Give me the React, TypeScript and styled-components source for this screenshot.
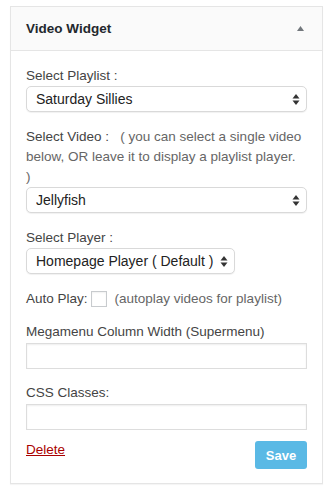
import styled, { createGlobalStyle } from "styled-components";

const GlobalStyle = createGlobalStyle`
  body {
    margin: 0;
    background: #ffffff;
    font-family: "Liberation Sans", Arial, sans-serif;
    color: #444;
  }
`;

const Page = styled.div`
  padding: 6px 10px 14px 10px;
`;

const Widget = styled.div`
  background: #fff;
  border: 1px solid #e5e5e5;
  box-shadow: 0 1px 1px rgba(0, 0, 0, 0.04);
`;

const Header = styled.div`
  height: 43px;
  display: flex;
  align-items: center;
  justify-content: space-between;
  padding: 0 18px 0 15px;
  background: #fafafa;
  border-bottom: 1px solid #e5e5e5;
`;

const Title = styled.h3`
  margin: 0;
  font-size: 13.5px;
  font-weight: 700;
  color: #23282d;
`;

const Body = styled.div`
  padding: 14px 15px 14px 15px;
`;

const Field = styled.div<{ $top?: number }>`
  margin-top: ${(p) => p.$top ?? 15}px;
`;

const Label = styled.label`
  display: block;
  font-size: 13.5px;
  line-height: 20px;
  color: #444;
`;

const Note = styled.span`
  color: #666;
`;

const SelectWrap = styled.div<{ $width?: number }>`
  position: relative;
  width: ${(p) => (p.$width ? `${p.$width}px` : "100%")};
`;

const Select = styled.select<{ $right?: number }>`
  appearance: none;
  -webkit-appearance: none;
  width: 100%;
  height: 26px;
  padding: 0 ${(p) => p.$right ?? 24}px 0 9px;
  border: 1px solid #d9d9d9;
  border-radius: 5px;
  background: #fff;
  box-shadow: 0 1px 1px rgba(0, 0, 0, 0.06);
  font-family: "Liberation Sans", Arial, sans-serif;
  font-size: 14px;
  color: #222;
  outline: none;
`;

const Arrows = styled.svg`
  position: absolute;
  right: 7px;
  top: 8px;
  pointer-events: none;
`;

const Row = styled.div`
  display: flex;
  align-items: center;
  font-size: 13.5px;
  line-height: 20px;
  color: #444;
`;

const Check = styled.input`
  appearance: none;
  -webkit-appearance: none;
  width: 16px;
  height: 16px;
  margin: 0 8px 0 3px;
  border: 1px solid #c8cbce;
  background: #fff;
  box-shadow: inset 0 1px 2px rgba(0, 0, 0, 0.06);
`;

const TextInput = styled.input`
  display: block;
  box-sizing: border-box;
  width: 100%;
  height: 26px;
  margin-top: 1px;
  border: 1px solid #ddd;
  background: #fff;
  box-shadow: inset 0 1px 2px rgba(0, 0, 0, 0.07);
  outline: none;
`;

const Actions = styled.div`
  display: flex;
  justify-content: space-between;
  align-items: flex-start;
  margin-top: 11px;
`;

const DeleteLink = styled.a`
  font-size: 13.5px;
  line-height: 18px;
  color: #a00;
  text-decoration: underline;
  cursor: pointer;
`;

const SaveButton = styled.button`
  width: 52px;
  height: 28px;
  border: none;
  border-radius: 3px;
  background: #5ab9e5;
  color: #fff;
  font-family: "Liberation Sans", Arial, sans-serif;
  font-size: 13px;
  font-weight: 700;
`;

function SelectArrows() {
  return (
    <Arrows width="8" height="11" viewBox="0 0 8 11">
      <path d="M4 0 L7.5 4.5 H0.5 Z" fill="#333" />
      <path d="M4 11 L7.5 6.5 H0.5 Z" fill="#333" />
    </Arrows>
  );
}

function App() {
  return (
    <Page>
      <GlobalStyle />
      <Widget>
        <Header>
          <Title>Video Widget</Title>
          <svg width="7" height="5" viewBox="0 0 7 5">
            <path d="M3.5 0 L7 5 H0 Z" fill="#72777c" />
          </svg>
        </Header>
        <Body>
          <Field $top={1}>
            <Label>Select Playlist :</Label>
            <SelectWrap>
              <Select defaultValue="sat">
                <option value="sat">Saturday Sillies</option>
              </Select>
              <SelectArrows />
            </SelectWrap>
          </Field>
          <Field>
            <Label>
              Select Video :&nbsp;&nbsp;&nbsp;
              <Note>
                ( you can select a single video below, OR leave it to display a
                playlist player.
                <br />)
              </Note>
            </Label>
            <SelectWrap>
              <Select defaultValue="jelly">
                <option value="jelly">Jellyfish</option>
              </Select>
              <SelectArrows />
            </SelectWrap>
          </Field>
          <Field>
            <Label>Select Player :</Label>
            <SelectWrap $width={209}>
              <Select defaultValue="home" $right={12}>
                <option value="home">Homepage Player ( Default )</option>
              </Select>
              <SelectArrows />
            </SelectWrap>
          </Field>
          <Field>
            <Row>
              Auto Play:
              <Check type="checkbox" />
              <Note>(autoplay videos for playlist)</Note>
            </Row>
          </Field>
          <Field $top={13}>
            <Label>Megamenu Column Width (Supermenu)</Label>
            <TextInput type="text" />
          </Field>
          <Field $top={14}>
            <Label>CSS Classes:</Label>
            <TextInput type="text" />
          </Field>
          <Actions>
            <DeleteLink>Delete</DeleteLink>
            <SaveButton type="button">Save</SaveButton>
          </Actions>
        </Body>
      </Widget>
    </Page>
  );
}

export default App;
